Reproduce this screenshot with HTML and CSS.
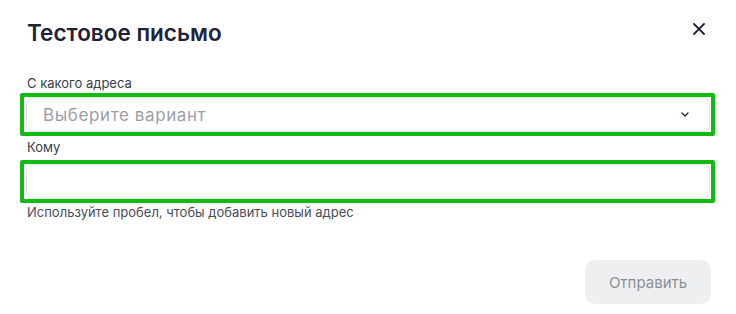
FILE: index.html
```html
<!DOCTYPE html>
<html lang="ru">

<head>
    <meta charset="UTF-8">
    <meta name="viewport" content="width=device-width, initial-scale=1.0">
    <title>Тестовое письмо</title>
    <link rel="stylesheet" href="styles.css">
</head>

<body>
    <section class="modal">
        <header class="modalHeader">
            <h2>Тестовое письмо</h2>
            <button class="close" aria-label="Закрыть">
                <svg width="12" height="12" viewBox="0 0 12 12">
                    <path d="M1 1L11 11M11 1L1 11" stroke="#1e2235" stroke-width="1.8" stroke-linecap="round" />
                </svg>
            </button>
        </header>

        <div class="field from">
            <label>С какого адреса</label>
            <div class="frame">
                <div class="control select">
                    <span class="placeholder">Выберите вариант</span>
                    <svg width="8" height="5" viewBox="0 0 8 5">
                        <path d="M1 1L4 4L7 1" stroke="#1e2235" stroke-width="1.3" fill="none" stroke-linecap="round" stroke-linejoin="round" />
                    </svg>
                </div>
            </div>
        </div>

        <div class="field to">
            <label>Кому</label>
            <div class="frame">
                <div class="control"></div>
            </div>
            <p class="hint">Используйте пробел, чтобы добавить новый адрес</p>
        </div>

        <footer class="actions">
            <button class="send" disabled>Отправить</button>
        </footer>
    </section>
</body>

</html>
```

FILE: styles.css
```css
* {
    box-sizing: border-box;
    margin: 0;
    padding: 0;
}

body {
    background-color: #fff;
    font-family: Inter, "Noto Sans", sans-serif;
    color: #1f2238;
}

.modal {
    padding: 18px 25px 0 27px;
}

.modalHeader {
    display: flex;
    justify-content: space-between;
    align-items: center;
    height: 30px;
    margin-bottom: 27px;
}

.modalHeader h2 {
    font-size: 22.5px;
    font-weight: 600;
    line-height: 30px;
}

.close {
    border: none;
    background: none;
    width: 20px;
    height: 20px;
    display: grid;
    place-items: center;
    margin-right: 2px;
    margin-top: -8px;
}

.field label {
    display: block;
    font-size: 13px;
    line-height: 16px;
    color: #3a3d4a;
    margin-bottom: 2px;
}

.from {
    margin-bottom: 3px;
}

.to label {
    margin-bottom: 5px;
}

.frame {
    border: 4px solid #13ba13;
    border-radius: 2px;
    margin: 0 -4px 0 -7px;
    padding: 0 1px 0 2px;
}

.control {
    height: 35px;
    border: 1px solid #e2e3e7;
    border-radius: 6px;
    background: #fff;
}

.select {
    display: flex;
    align-items: center;
    justify-content: space-between;
    padding: 0 20px 0 16px;
}

.placeholder {
    font-size: 17px;
    letter-spacing: 0.6px;
    color: #9c9ea7;
}

.hint {
    margin-top: 1px;
    font-size: 13px;
    line-height: 16px;
    color: #4a4d5a;
}

.actions {
    display: flex;
    justify-content: flex-end;
    margin-top: 40px;
}

.send {
    width: 126px;
    height: 44px;
    border: none;
    border-radius: 10px;
    background-color: #eeeff1;
    color: #8c8e97;
    font-family: Inter, "Noto Sans", sans-serif;
    font-size: 15px;
}
```
